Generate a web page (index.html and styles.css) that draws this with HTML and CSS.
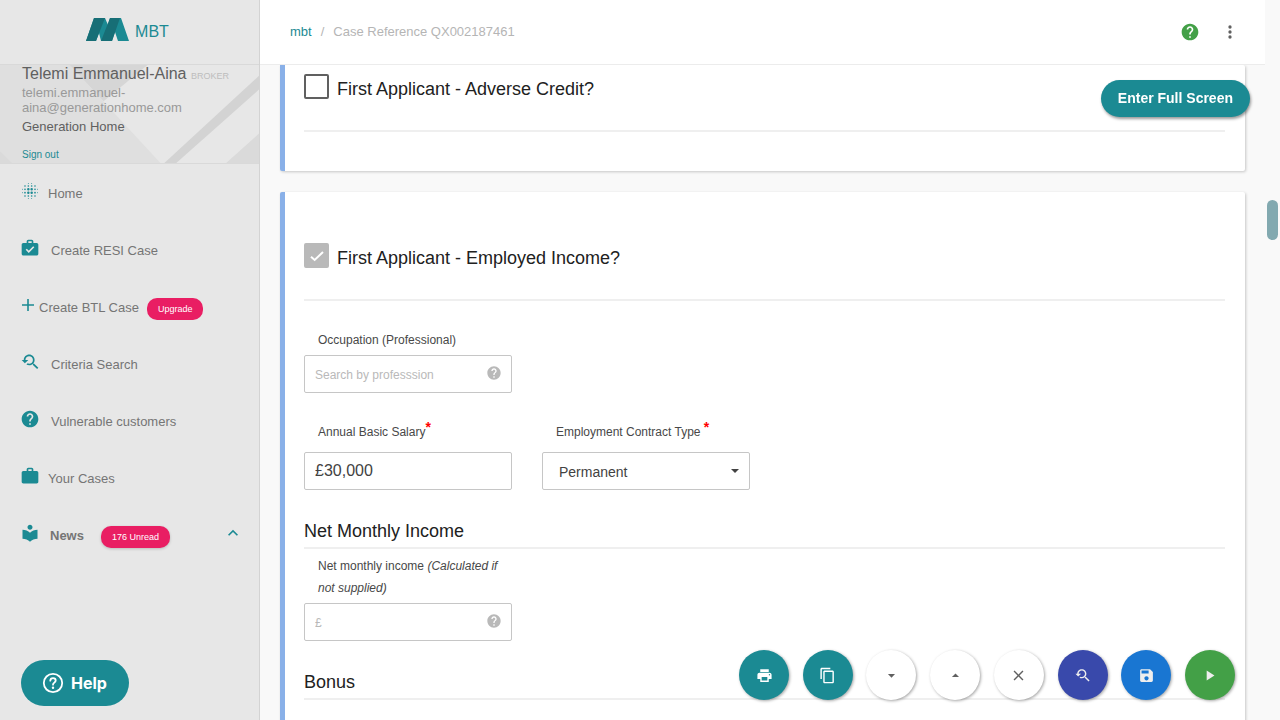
FILE: index.html
```html
<!DOCTYPE html>
<html lang="en">
<head>
<meta charset="utf-8">
<meta name="viewport" content="width=device-width, initial-scale=1">
<title>MBT - Case Reference QX002187461</title>
<link rel="stylesheet" href="styles.css">
</head>
<body>
<svg class="sprite" aria-hidden="true">
  <symbol id="i-help" viewBox="0 0 24 24"><path d="M12 2C6.480 2 2 6.480 2 12s4.480 10 10 10 10-4.480 10-10S17.520 2 12 2zm1 17h-2v-2h2v2zm2.070-7.750l-.9.920C13.450 12.900 13 13.500 13 15h-2v-.5c0-1.100.450-2.100 1.170-2.830l1.240-1.260c.370-.360.590-.860.590-1.410 0-1.100-.9-2-2-2s-2 .9-2 2H8c0-2.210 1.790-4 4-4s4 1.790 4 4c0 .880-.360 1.680-.930 2.250z"/></symbol>
  <symbol id="i-search" viewBox="0 0 24 24"><path d="M17.010 14h-.8l-.270-.270c.980-1.140 1.570-2.610 1.570-4.230 0-3.590-2.910-6.500-6.500-6.500s-6.500 3-6.500 6.500H2l3.840 4 4.160-4H6.510C6.510 7 8.530 5 11.010 5s4.500 2.010 4.500 4.500c0 2.480-2.020 4.500-4.500 4.500-.650 0-1.260-.140-1.820-.380L7.710 15.100c.970.570 2.090.9 3.300.9 1.610 0 3.080-.590 4.220-1.570l.270.270v.790l5.010 4.990L22 19l-4.990-5z"/></symbol>
  <symbol id="i-work" viewBox="0 0 24 24"><path d="M20 6h-4V4c0-1.110-.890-2-2-2h-4c-1.110 0-2 .890-2 2v2H4c-1.110 0-2 .890-2 2v11c0 1.110.890 2 2 2h16c1.110 0 2-.890 2-2V8c0-1.110-.890-2-2-2zm-6 0h-4V4h4v2z"/></symbol>
</svg>
<div class="app">
  <aside class="sidebar">
    <a class="brand" href="#">
      <svg class="brand-mark" viewBox="0 0 43 24" aria-hidden="true">
        <path fill="#1b8a93" d="M8 0h11l3 7 2-7h11l8 23H32L29 14l-3 9H15l-2-8-3 8H0z"/>
        <path fill="#176e76" d="M8 0h11L10 23H0zM24 0h10L26 23H15z"/>
      </svg>
      <span>MBT</span>
    </a>
    <section class="profile">
      <svg class="profile-art" viewBox="0 0 260 100" preserveAspectRatio="none" aria-hidden="true">
        <path fill="#dfdfdf" d="M0 0h70l91 100H0z"/>
        <path fill="#d6d6d6" d="M70 0h78l-44 37z"/>
        <path fill="#d3d3d3" d="M260 11L165 100h12L260 25z"/>
        <path fill="#dadada" d="M260 70L227 100h33zM0 88l12 12H0z"/>
      </svg>
      <div class="profile-text">
        <div class="profile-name">Telemi Emmanuel-Aina <small>BROKER</small></div>
        <div class="profile-email">telemi.emmanuel-aina@generationhome.com</div>
        <div class="profile-company">Generation Home</div>
        <a class="sign-out" href="#">Sign out</a>
      </div>
    </section>
    <nav class="nav">
      <a class="nav-link nav-link-tight" href="#">
        <svg class="icon" viewBox="0 0 24 24" aria-hidden="true"><g fill="none" stroke="currentColor" stroke-linecap="round"><path stroke-width="2" stroke-dasharray="0 4" d="M6 6h13M6 18h13M6 10v5M18 10v5"/><path stroke-width="3" stroke-dasharray="0 4" d="M10 10h5M10 14h5"/><path stroke-width="1" stroke-dasharray="0 4" d="M10 3h5M10 21h5M3 10v5M21 10v5"/></g></svg>
        <span>Home</span></a>
      <a class="nav-link" href="#">
        <svg class="icon" viewBox="0 0 24 24" aria-hidden="true"><use href="#i-work"/><path fill="none" stroke="#e7e7e7" stroke-width="2" d="M7.500 13.500l3 3 6-6"/></svg>
        <span>Create RESI Case</span></a>
      <a class="nav-link nav-link-close" href="#">
        <svg class="icon icon-plus" viewBox="0 0 16 20" aria-hidden="true"><path fill="none" stroke="currentColor" stroke-width="1.600" d="M2 10h12M8 4v12"/></svg>
        <span>Create BTL Case</span><span class="badge">Upgrade</span></a>
      <a class="nav-link" href="#"><svg class="icon" aria-hidden="true"><use href="#i-search"/></svg><span>Criteria Search</span></a>
      <a class="nav-link" href="#"><svg class="icon" aria-hidden="true"><use href="#i-help"/></svg><span>Vulnerable customers</span></a>
      <a class="nav-link nav-link-tight" href="#"><svg class="icon" aria-hidden="true"><use href="#i-work"/></svg><span>Your Cases</span></a>
      <a class="nav-link nav-link-news" href="#">
        <svg class="icon" viewBox="0 0 24 24" aria-hidden="true"><path d="M12 11.550C9.640 9.350 6.480 8 3 8v11c3.480 0 6.640 1.350 9 3.550 2.360-2.190 5.520-3.550 9-3.550V8c-3.480 0-6.640 1.350-9 3.550zM12 8c1.660 0 3-1.340 3-3s-1.340-3-3-3-3 1.340-3 3 1.340 3 3 3z"/></svg>
        <span>News</span><span class="badge badge-raised">176 Unread</span>
        <svg class="icon chevron" viewBox="0 0 24 24" aria-hidden="true"><path d="M12 8l-6 6 1.410 1.410L12 10.830l4.590 4.580L18 14z"/></svg></a>
    </nav>
  </aside>

  <div class="main">
    <header class="topbar">
      <nav class="crumbs" aria-label="Breadcrumb"><a href="#">mbt</a><span class="slash">/</span><span>Case Reference QX002187461</span></nav>
      <div class="topbar-actions">
        <button class="icon-button help-green" type="button" aria-label="Help"><svg class="icon" aria-hidden="true"><use href="#i-help"/></svg></button>
        <button class="icon-button" type="button" aria-label="More"><svg class="icon" viewBox="0 0 24 24" aria-hidden="true"><circle cx="12" cy="6" r="2"/><circle cx="12" cy="12" r="2"/><circle cx="12" cy="18" r="2"/></svg></button>
      </div>
    </header>
    <main class="content">
      <section class="card card-first">
        <div class="card-title">
          <input class="check" type="checkbox" id="adverse">
          <label for="adverse">First Applicant - Adverse Credit?</label>
        </div>
      </section>
      <section class="card card-income">
        <div class="card-title">
          <span class="check-wrap"><input class="check" type="checkbox" id="employed" checked disabled><svg class="tick" viewBox="0 0 24 24" aria-hidden="true"><path fill="none" stroke="#fff" stroke-width="3" d="M3 13l5.500 5L21 6"/></svg></span>
          <label for="employed">First Applicant - Employed Income?</label>
        </div>
        <div class="fields fields-first">
          <div class="field">
            <label for="occupation">Occupation (Professional)</label>
            <div class="control"><input type="text" id="occupation" placeholder="Search by professsion"><svg class="hint" aria-hidden="true"><use href="#i-help"/></svg></div>
          </div>
        </div>
        <div class="fields fields-required">
          <div class="field">
            <label for="salary">Annual Basic Salary<span class="required">*</span></label>
            <div class="control"><input type="text" id="salary" value="£30,000"></div>
          </div>
          <div class="field">
            <label for="contract">Employment Contract Type <span class="required">*</span></label>
            <div class="control"><select id="contract"><option>Permanent</option></select><svg class="caret" viewBox="0 0 10 5" aria-hidden="true"><path d="M0 0h10L5 5z"/></svg></div>
          </div>
        </div>
        <h2>Net Monthly Income</h2>
        <div class="fields fields-net">
          <div class="field">
            <label for="net">Net monthly income <em>(Calculated if not supplied)</em></label>
            <div class="control"><input type="text" id="net" placeholder="£"><svg class="hint" aria-hidden="true"><use href="#i-help"/></svg></div>
          </div>
        </div>
        <h2>Bonus</h2>
      </section>
    </main>
  </div>
  <div class="scroll-track"><div class="scroll-thumb"></div></div>
</div>

<button class="full-screen" type="button">Enter Full Screen</button>
<button class="help-button" type="button">
  <svg viewBox="0 0 22 22" aria-hidden="true"><circle cx="11" cy="11" r="9.200" fill="none" stroke="#fff" stroke-width="1.800"/><path fill="none" stroke="#fff" stroke-width="1.800" stroke-linecap="round" d="M8.300 8.700C8.400 5.300 13.700 5.400 13.700 8.600c0 2-2.700 2.100-2.700 4.100"/><circle cx="11" cy="15.700" r="1.200" fill="#fff"/></svg>
  <span>Help</span>
</button>
<div class="fabs">
  <button class="fab fab-teal" type="button" aria-label="Print"><svg viewBox="0 0 24 24" aria-hidden="true"><path d="M19 8H5c-1.660 0-3 1.340-3 3v6h4v4h12v-4h4v-6c0-1.660-1.340-3-3-3zm-3 11H8v-5h8v5zm3-7c-.550 0-1-.450-1-1s.450-1 1-1 1 .450 1 1-.450 1-1 1zm-1-9H6v4h12V3z"/></svg></button>
  <button class="fab fab-teal" type="button" aria-label="Copy"><svg viewBox="0 0 24 24" aria-hidden="true"><path d="M16 1H4c-1.100 0-2 .9-2 2v14h2V3h12V1zm3 4H8c-1.100 0-2 .9-2 2v14c0 1.100.9 2 2 2h11c1.100 0 2-.9 2-2V7c0-1.100-.9-2-2-2zm0 16H8V7h11v14z"/></svg></button>
  <button class="fab" type="button" aria-label="Move down"><svg viewBox="0 0 24 24" aria-hidden="true"><path d="M7 10l5 5 5-5z"/></svg></button>
  <button class="fab" type="button" aria-label="Move up"><svg viewBox="0 0 24 24" aria-hidden="true"><path d="M7 14l5-5 5 5z"/></svg></button>
  <button class="fab" type="button" aria-label="Close"><svg viewBox="0 0 24 24" aria-hidden="true"><path d="M19 6.410L17.590 5 12 10.590 6.410 5 5 6.410 10.590 12 5 17.590 6.410 19 12 13.410 17.590 19 19 17.590 13.410 12z"/></svg></button>
  <button class="fab fab-indigo" type="button" aria-label="Search criteria"><svg aria-hidden="true"><use href="#i-search"/></svg></button>
  <button class="fab fab-blue" type="button" aria-label="Save"><svg viewBox="0 0 24 24" aria-hidden="true"><path d="M17 3H5c-1.110 0-2 .9-2 2v14c0 1.100.890 2 2 2h14c1.100 0 2-.9 2-2V7l-4-4zm-5 16c-1.660 0-3-1.340-3-3s1.340-3 3-3 3 1.340 3 3-1.340 3-3 3zm3-10H5V5h10v4z"/></svg></button>
  <button class="fab fab-green" type="button" aria-label="Run"><svg viewBox="0 0 24 24" aria-hidden="true"><path d="M8 5v14l11-7z"/></svg></button>
</div>
</body>
</html>
```

FILE: styles.css
```css
* { box-sizing: border-box; }
body {
  margin: 0;
  background: #f9f9f9;
  color: #212121;
  font-family: "Liberation Sans", Arial, sans-serif;
  font-size: 13px;
}
a { color: #1b8a93; text-decoration: none; }
button, input, select { font-family: inherit; }
button { border: 0; cursor: pointer; }
svg { fill: currentColor; flex: none; }
.sprite { display: none; }
.app { display: flex; height: 100vh; overflow: hidden; }

/* Sidebar */
.sidebar {
  flex: 0 0 260px;
  background: #e7e7e7;
  border-right: 1px solid #d3d3d3;
}
.brand {
  display: flex;
  align-items: center;
  justify-content: center;
  gap: 6px;
  height: 64px;
  padding-right: 4px;
  font-size: 16px;
}
.brand-mark { width: 43px; height: 24px; margin-bottom: 4px; }
.profile {
  position: relative;
  height: 100px;
  border-top: 1px solid #d9d9d9;
  border-bottom: 1px solid #d9d9d9;
}
.profile-art { position: absolute; inset: 0; width: 100%; height: 100%; }
.profile-text { position: relative; padding: 0 20px 0 22px; }
.profile-name { color: #606060; font-size: 16px; line-height: 18px; white-space: nowrap; }
.profile-name small { color: #bdbdbd; font-size: 9px; }
.profile-email { color: #999; line-height: 15px; }
.profile-company { margin-top: 4px; color: #606060; line-height: 15px; }
.sign-out { display: block; margin-top: 14px; font-size: 10px; line-height: 14px; }
.nav-link {
  display: flex;
  align-items: center;
  gap: 11px;
  height: 57px;
  padding: 2px 16px 0 20px;
  color: #757575;
}
.nav-link-tight { gap: 8px; }
.nav-link-close { gap: 3px; }
.nav-link-news { gap: 10px; font-weight: bold; }
.icon { width: 20px; height: 20px; color: #1b8a93; }
.nav-link .icon { margin-bottom: 6px; }
.nav-link .icon-plus { width: 16px; }
.badge {
  margin: 2px 0 0 5px;
  padding: 0 11px;
  border-radius: 10px;
  background: #e91e63;
  color: #fff;
  font-size: 9px;
  font-weight: normal;
  line-height: 22px;
}
.badge-raised { margin-left: 7px; box-shadow: 0 1px 3px rgba(0, 0, 0, .2); }
.chevron { margin-left: auto; }

/* Top bar */
.main { display: flex; flex: 1; flex-direction: column; min-width: 0; }
.topbar {
  display: flex;
  flex: none;
  align-items: center;
  justify-content: space-between;
  height: 65px;
  padding: 0 25px 1px 30px;
  border-bottom: 1px solid #ececec;
  background: #fff;
}
.crumbs { display: flex; color: #b5b5b5; }
.crumbs .slash { padding: 0 9px; }
.topbar-actions { display: flex; gap: 20px; }
.icon-button { display: flex; padding: 0; background: none; }
.help-green .icon { color: #43a047; }
.icon-button:last-child .icon { color: #606060; }

/* Cards */
.content { flex: 1; overflow: hidden; padding: 0 20px; }
.card {
  padding: 0 20px 0 19px;
  border-left: 5px solid #89b0e8;
  border-radius: 2px;
  background: #fff;
  box-shadow: 1px 1px 3px rgba(0, 0, 0, .2);
}
.card-first { padding-top: 9px; padding-bottom: 39px; border-top-left-radius: 0; }
.card-income { margin-top: 21px; padding-top: 51px; padding-bottom: 40px; }
.card-title {
  display: flex;
  align-items: center;
  gap: 8px;
  padding-bottom: 31px;
  border-bottom: 2px solid #efefef;
  font-size: 18px;
  line-height: 25px;
}
.card-title label { padding-top: 3px; margin-bottom: -3px; }
.check {
  display: block;
  width: 25px;
  height: 25px;
  margin: 0;
  border: 2px solid #606060;
  border-radius: 2px;
  appearance: none;
  background: #fff;
}
.check:checked { border-color: #b9b9b9; background: #b9b9b9; }
.check-wrap { position: relative; }
.tick { position: absolute; top: 5px; left: 5px; width: 16px; height: 16px; }
h2 {
  margin: 30px 0 0;
  padding-bottom: 5px;
  border-bottom: 2px solid #efefef;
  font-size: 18px;
  font-weight: normal;
  line-height: 22px;
}

/* Fields */
.fields { display: flex; gap: 30px; }
.fields-first { margin-top: 28px; }
.fields-required { margin-top: 28px; }
.fields-net { margin-top: 6px; }
.field { width: 208px; }
.field label {
  display: block;
  margin: 0 14px 4px;
  color: #484848;
  font-size: 12px;
  line-height: 22px;
}
.fields-required label { margin-right: 0; margin-bottom: 9px; }
.required { color: #f00; font-size: 14px; font-weight: bold; line-height: 0; vertical-align: 4px; }
.control { position: relative; }
.control input, .control select {
  display: block;
  width: 100%;
  height: 38px;
  padding: 0 10px;
  border: 1px solid #c6c6c6;
  border-radius: 2px;
  background: #fff;
  color: #424242;
  font-size: 16px;
}
.control input::placeholder { color: #b9b9b9; font-size: 12px; opacity: 1; }
.control select { padding: 2px 16px 0; appearance: none; font-size: 14px; }
.hint { position: absolute; top: 10px; right: 10px; width: 16px; height: 16px; color: #b9b9b9; }
.caret { position: absolute; top: 17px; right: 11px; width: 8px; height: 4px; color: #424242; }

/* Scrollbar */
.scroll-track { flex: 0 0 15px; padding: 200px 2px 0; }
.scroll-thumb { height: 40px; border-radius: 6px; background: #82a9b0; }

/* Floating actions */
.full-screen {
  position: fixed;
  top: 80px;
  right: 30px;
  padding: 0 17px;
  border-radius: 20px;
  background: #1b8a93;
  box-shadow: 1px 2px 3px rgba(0, 0, 0, .4);
  color: #fff;
  font-size: 14px;
  font-weight: bold;
  line-height: 37px;
}
.help-button {
  position: fixed;
  bottom: 14px;
  left: 21px;
  display: flex;
  align-items: center;
  gap: 7px;
  height: 46px;
  padding: 0 22px 0 21px;
  border-radius: 23px;
  background: #1b8a93;
  color: #fff;
  font-family: Inter, "Liberation Sans", sans-serif;
  font-size: 16px;
  font-weight: 700;
}
.help-button svg { width: 22px; height: 22px; }
.fabs {
  position: fixed;
  right: 45px;
  bottom: 20px;
  display: flex;
  justify-content: space-between;
  width: 496px;
}
.fab {
  display: flex;
  align-items: center;
  justify-content: center;
  width: 50px;
  height: 50px;
  padding: 0;
  border-radius: 50%;
  background: #fff;
  box-shadow: 1px 1px 3px rgba(0, 0, 0, .35);
  color: #606060;
}
.fab svg { width: 17px; height: 17px; }
.fab-teal { background: #1b8a93; color: #fff; }
.fab-indigo { background: #3949ab; color: #eee; }
.fab-blue { background: #1976d2; color: #eee; }
.fab-green { background: #43a047; color: #eee; }
```
